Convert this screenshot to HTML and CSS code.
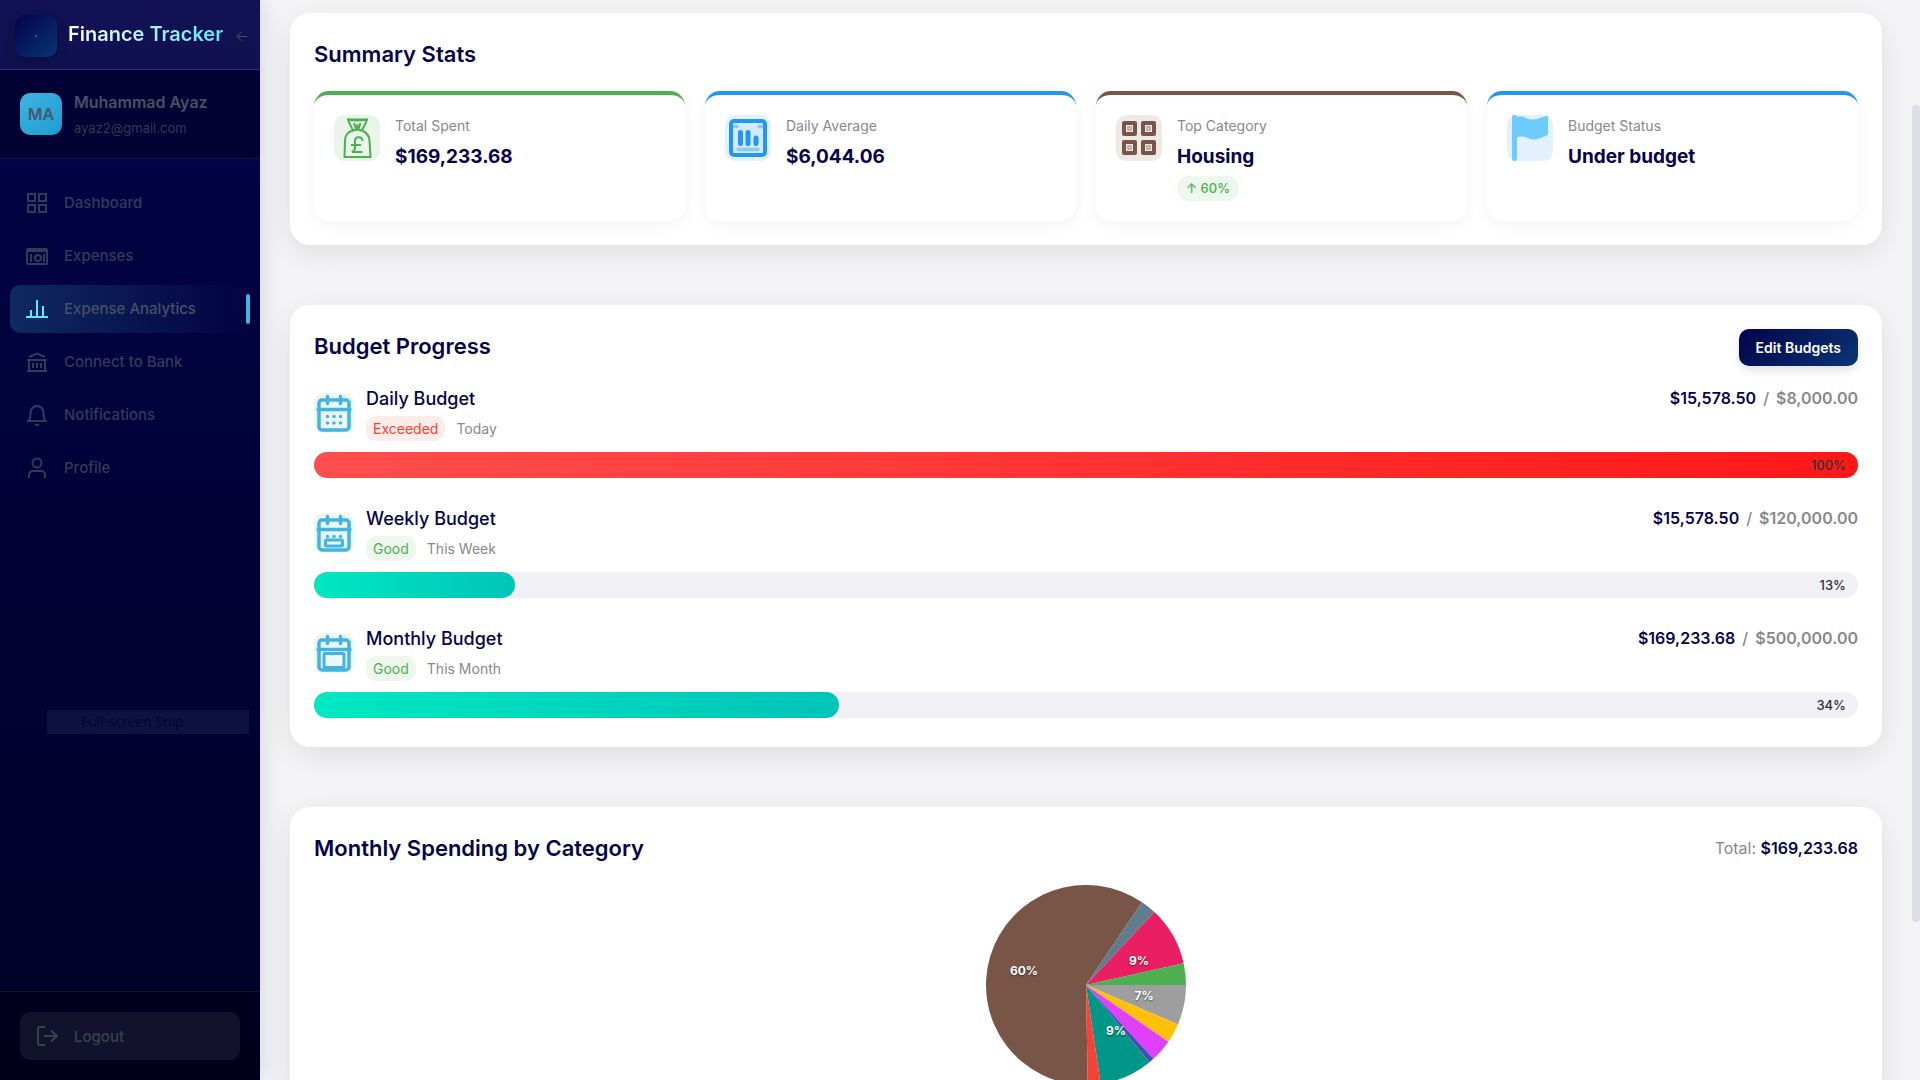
FILE: index.html
```html
<!DOCTYPE html>
<html lang="en">
<head>
<meta charset="utf-8">
<meta name="viewport" content="width=device-width, initial-scale=1">
<title>Finance Tracker – Expense Analytics</title>
<link rel="stylesheet" href="styles.css">
</head>
<body>
<div class="app">
  <aside class="sidebar">
    <div class="brand">
      <div class="brand-logo"><span class="brand-dot"></span></div>
      <span class="brand-name">Finance Tracker</span>
      <button class="collapse" type="button" aria-label="Collapse sidebar">←</button>
    </div>
    <div class="profile">
      <div class="avatar">MA</div>
      <div class="profile-text">
        <span class="profile-name">Muhammad Ayaz</span>
        <span class="profile-mail">ayaz2@gmail.com</span>
      </div>
    </div>
    <nav class="nav">
      <a class="nav-item" href="#">
        <svg class="nav-icon" viewBox="0 0 22 22"><path d="M2 2h7v7H2zM13 2h7v7h-7zM2 13h7v7H2zM13 13h7v7h-7z"/></svg>
        <span>Dashboard</span>
      </a>
      <a class="nav-item" href="#">
        <svg class="nav-icon" viewBox="0 0 22 22"><rect x="1" y="4" width="20" height="15" rx="1"/><path d="M1 6h20M5 9v8M18 9v8"/><circle cx="12" cy="13" r="3"/></svg>
        <span>Expenses</span>
      </a>
      <a class="nav-item active" href="#" aria-current="page">
        <svg class="nav-icon" viewBox="0 0 22 22"><path d="M0 19h22M5 19v-7M11 19V2M17 19V8"/></svg>
        <span>Expense Analytics</span>
      </a>
      <a class="nav-item" href="#">
        <svg class="nav-icon" viewBox="0 0 22 22"><path d="M3 6l8-3.500L19 6M1 9h20M3 9v11M19 9v11M1 20h20M7 12v5M11 12v5M15 12v5"/></svg>
        <span>Connect to Bank</span>
      </a>
      <a class="nav-item" href="#">
        <svg class="nav-icon" viewBox="0 0 22 22"><path d="M1 17h20M3 17c1-2 1.500-4 1.500-8a6.500 7 0 0 1 13 0c0 4 .5 6 1.500 8M9 20q2 2.500 4 0"/></svg>
        <span>Notifications</span>
      </a>
      <a class="nav-item" href="#">
        <svg class="nav-icon" viewBox="0 0 22 22"><circle cx="11" cy="6" r="4.500"/><path d="M3 21v-3a4 4 0 0 1 4-4h8a4 4 0 0 1 4 4v3"/></svg>
        <span>Profile</span>
      </a>
    </nav>
    <div class="sidebar-foot">
      <button class="logout" type="button">
        <svg class="nav-icon" viewBox="0 0 22 22"><path d="M9 2H4a2 2 0 0 0-2 2v14a2 2 0 0 0 2 2h5M8 11h13M15 5.500l6 5.500-6 5.500"/></svg>
        <span>Logout</span>
      </button>
    </div>
    <div class="snip">Full-screen Snip</div>
  </aside>

  <main class="content">
    <section class="panel">
      <h2>Summary Stats</h2>
      <div class="stats">
        <article class="stat stat-green">
          <div class="stat-icon">
            <svg viewBox="0 0 46 46" fill="none" stroke="currentColor" stroke-width="2"><path d="M14 4.500h19c-1 4-4 8-5 11 5 2 7 5 7.500 10L36.500 42h-26l.5-16c0-5 2-9 8-10.500C17.500 12 15 8 14 4.500z"/><path d="M14 4.500q9 2 19 0M18 15.500q5-1.500 10 0M20 8l2 6M26.500 8l-2 6M23.300 9v5"/><path d="M28.500 26c0-5-7.500-5-7.500 0v7c0 2-1 3-3 4h10.500M17 30h10"/></svg>
          </div>
          <div class="stat-text"><span class="stat-label">Total Spent</span><strong class="stat-value">$169,233.68</strong></div>
        </article>
        <article class="stat stat-blue">
          <div class="stat-icon">
            <svg viewBox="0 0 46 46" fill="none" stroke="currentColor" stroke-linecap="round"><rect x="6" y="6" width="34" height="34" rx="3" fill="currentColor" fill-opacity=".08" stroke-width="4"/><path d="M9 11.500h3M34 11.500h3M13 34.500h20" stroke-width="3.500" opacity=".4"/><path d="M15.500 17.500v11M23 17.500v11M31 23v5.500" stroke-width="5"/></svg>
          </div>
          <div class="stat-text"><span class="stat-label">Daily Average</span><strong class="stat-value">$6,044.06</strong></div>
        </article>
        <article class="stat stat-brown">
          <div class="stat-icon">
            <svg viewBox="0 0 46 46" fill="none" stroke="currentColor" stroke-width="4" stroke-linejoin="round"><path d="M8 8h11v11H8zM27 8h11v11H27zM8 27h11v11H8zM27 27h11v11H27z"/><path d="M12 12h3v3h-3zM31 12h3v3h-3zM12 31h3v3h-3zM31 31h3v3h-3z" stroke-width="2" opacity=".4"/></svg>
          </div>
          <div class="stat-text"><span class="stat-label">Top Category</span><strong class="stat-value">Housing</strong><span class="trend">↑ 60%</span></div>
        </article>
        <article class="stat stat-blue">
          <div class="stat-icon">
            <svg viewBox="0 0 46 46" fill="#6cccff"><rect x="5" y="0" width="5" height="46" rx="2"/><path d="M9 2.500c4-2.500 8-.5 11 1 7 3 13-1 19-2.500q2-.5 2 1V19q0 1-1 1.500c-5 1.500-12 6.500-19 2.500-4-2-8-2-12-.5z"/></svg>
          </div>
          <div class="stat-text"><span class="stat-label">Budget Status</span><strong class="stat-value">Under budget</strong></div>
        </article>
      </div>
    </section>

    <section class="panel panel-budget">
      <div class="panel-head">
        <h2>Budget Progress</h2>
        <button class="edit" type="button">Edit Budgets</button>
      </div>
      <div class="budgets">
        <article class="budget">
          <div class="budget-head">
            <svg class="cal" viewBox="0 0 40 40"><rect x="5" y="7" width="30" height="30" rx="3"/><path d="M4 16.500h32M13.500 3.500v7M26.500 3.500v7"/><path class="dots" d="M13.500 23.500h0M20 23.500h0M26.500 23.500h0M13.500 30h0M20 30h0M26.500 30h0"/></svg>
            <div class="budget-text">
              <h3>Daily Budget</h3>
              <div class="budget-meta"><span class="tag tag-bad">Exceeded</span><span>Today</span></div>
            </div>
            <div class="amount"><b>$15,578.50</b><i>/</i><span>$8,000.00</span></div>
          </div>
          <div class="bar"><div class="fill fill-bad" style="width:100%"></div><span class="percent">100%</span></div>
        </article>
        <article class="budget">
          <div class="budget-head">
            <svg class="cal" viewBox="0 0 40 40"><rect x="5" y="7" width="30" height="30" rx="3"/><path d="M4 16.500h32M13.500 3.500v7M26.500 3.500v7"/><path class="dots" d="M13.500 23.500h0M20 23.500h0M26.500 23.500h0"/><rect class="inner" x="11.500" y="27" width="17" height="6" rx="1"/></svg>
            <div class="budget-text">
              <h3>Weekly Budget</h3>
              <div class="budget-meta"><span class="tag tag-good">Good</span><span>This Week</span></div>
            </div>
            <div class="amount"><b>$15,578.50</b><i>/</i><span>$120,000.00</span></div>
          </div>
          <div class="bar"><div class="fill" style="width:13%"></div><span class="percent">13%</span></div>
        </article>
        <article class="budget">
          <div class="budget-head">
            <svg class="cal" viewBox="0 0 40 40"><rect x="5" y="7" width="30" height="30" rx="3"/><path d="M4 16.500h32M13.500 3.500v7M26.500 3.500v7"/><rect class="inner" x="10" y="20.500" width="20" height="14" rx="1"/></svg>
            <div class="budget-text">
              <h3>Monthly Budget</h3>
              <div class="budget-meta"><span class="tag tag-good">Good</span><span>This Month</span></div>
            </div>
            <div class="amount"><b>$169,233.68</b><i>/</i><span>$500,000.00</span></div>
          </div>
          <div class="bar"><div class="fill" style="width:34%"></div><span class="percent">34%</span></div>
        </article>
      </div>
    </section>

    <section class="panel">
      <div class="panel-head panel-head-pie">
        <h2>Monthly Spending by Category</h2>
        <p class="total">Total: <b>$169,233.68</b></p>
      </div>
      <svg class="pie" viewBox="-100 -100 200 200">
        <path fill="#795548" d="M0 0L56.060 -82.810A100 100 0 1 0 1.750 99.980z"/>
        <path fill="#607d8b" d="M0 0L68.450 -72.900A100 100 0 0 0 56.060 -82.810z"/>
        <path fill="#e91e63" d="M0 0L97.630 -21.640A100 100 0 0 0 68.450 -72.900z"/>
        <path fill="#4caf50" d="M0 0L100 0A100 100 0 0 0 97.630 -21.640z"/>
        <path fill="#9e9e9e" d="M0 0L91.910 39.390A100 100 0 0 0 100 0z"/>
        <path fill="#ffc107" d="M0 0L82.410 56.640A100 100 0 0 0 91.910 39.390z"/>
        <path fill="#e040fb" d="M0 0L67.430 73.850A100 100 0 0 0 82.410 56.640z"/>
        <path fill="#3f51b5" d="M0 0L63.470 77.270A100 100 0 0 0 67.430 73.850z"/>
        <path fill="#009688" d="M0 0L14.610 98.930A100 100 0 0 0 63.470 77.270z"/>
        <path fill="#f44336" d="M0 0L1.750 99.980A100 100 0 0 0 14.610 98.930z"/>
        <text x="-62" y="-10">60%</text>
        <text x="53" y="-20">9%</text>
        <text x="58" y="15">7%</text>
        <text x="30" y="50">9%</text>
      </svg>
    </section>
  </main>
  <div class="rail"><div class="thumb"></div></div>
</div>
</body>
</html>
```
FILE: styles.css
```css
* { box-sizing: border-box; }

body {
  margin: 0;
  font-family: Inter, "Open Sans", sans-serif;
  color: #04044a;
  background: #f4f4f7;
}

h2, h3, p { margin: 0; }
button { font: inherit; border: 0; cursor: pointer; }

.app {
  display: flex;
  height: 100vh;
  overflow: hidden;
}

/* Sidebar */
.sidebar {
  position: relative;
  z-index: 1;
  display: flex;
  flex-direction: column;
  flex: 0 0 260px;
  background: linear-gradient(180deg, #03034a, #010126);
  box-shadow: 4px 0 20px rgba(0, 0, 0, .1);
}

.brand {
  display: flex;
  align-items: center;
  height: 70px;
  padding: 0 11px 0 15px;
  background: rgba(255, 255, 255, .06);
  border-bottom: 1px solid rgba(255, 255, 255, .14);
}

.brand-logo {
  display: flex;
  align-items: center;
  justify-content: center;
  width: 42px;
  height: 42px;
  margin: 2px 11px 0 0;
  border-radius: 10px;
  background: linear-gradient(135deg, #03034a, #0a3575);
  box-shadow: 0 4px 10px rgba(0, 0, 0, .25);
}

.brand-dot {
  width: 2px;
  height: 2px;
  background: #3a5585;
}

.brand-name {
  padding-bottom: 2px;
  font-size: 20px;
  font-weight: 600;
  line-height: 28px;
  white-space: nowrap;
  color: transparent;
  background: linear-gradient(90deg, #fff, #5ee7ff);
  background-clip: text;
  -webkit-background-clip: text;
}

.collapse {
  margin-left: auto;
  padding: 2px 0 0;
  font-size: 15px;
  font-weight: 300;
  color: #454a70;
  background: none;
}

.profile {
  display: flex;
  gap: 12px;
  height: 89px;
  padding: 23px 20px 0;
  background: rgba(0, 0, 0, .25);
  border-bottom: 1px solid rgba(255, 255, 255, .08);
}

.avatar {
  width: 42px;
  height: 42px;
  border-radius: 10px;
  font-size: 16px;
  font-weight: 600;
  line-height: 42px;
  text-align: center;
  color: #46586f;
  background: linear-gradient(135deg, #42b4e0, #1a9dd2);
}

.profile-text {
  display: flex;
  flex-direction: column;
  gap: 8px;
}

.profile-name {
  font-size: 16px;
  font-weight: 600;
  line-height: 18px;
  color: #4a4f62;
}

.profile-mail {
  font-size: 13px;
  line-height: 18px;
  color: #343854;
}

.nav {
  display: flex;
  flex: 1;
  flex-direction: column;
  gap: 5px;
  padding: 20px 10px;
}

.nav-item {
  position: relative;
  display: flex;
  align-items: center;
  gap: 16px;
  height: 48px;
  padding: 0 16px;
  border-radius: 10px;
  font-size: 15px;
  font-weight: 500;
  color: #343a57;
  text-decoration: none;
}

.nav-item span { padding-bottom: 2px; }

.nav-icon {
  width: 22px;
  height: 22px;
  fill: none;
  stroke: currentColor;
  stroke-width: 2;
}

.nav-item.active {
  color: #465066;
  background: linear-gradient(90deg, #0f2961, rgba(15, 41, 97, 0));
}

.nav-item.active .nav-icon { color: #5ee7ff; }

.nav-item.active::after {
  content: "";
  position: absolute;
  top: 9px;
  right: 0;
  width: 4px;
  height: 30px;
  border-radius: 2px;
  background: #42b4e0;
}

.sidebar-foot {
  padding: 20px;
  background: rgba(0, 0, 0, .25);
  border-top: 1px solid rgba(255, 255, 255, .08);
}

.logout {
  display: flex;
  align-items: center;
  gap: 16px;
  width: 100%;
  height: 48px;
  padding: 0 16px;
  border-radius: 10px;
  font-size: 15px;
  font-weight: 500;
  color: #39414f;
  background: #12122d;
}

.snip {
  position: absolute;
  top: 710px;
  left: 47px;
  width: 202px;
  height: 24px;
  padding-left: 34px;
  font-family: "Open Sans", sans-serif;
  font-size: 14px;
  line-height: 24px;
  color: #04042e;
  background: #0d1240;
}

/* Content */
.content {
  display: flex;
  flex: 1;
  flex-direction: column;
  gap: 60px;
  min-width: 0;
  padding: 13px 30px 0;
}

.panel {
  flex: none;
  padding: 24px;
  border-radius: 20px;
  background: #fff;
  box-shadow: 0 8px 30px rgba(0, 0, 0, .09);
}

.panel h2 {
  font-size: 22px;
  font-weight: 600;
  line-height: 34px;
}

.panel-head {
  display: flex;
  align-items: flex-start;
  justify-content: space-between;
  height: 37px;
}

.stats {
  display: grid;
  grid-template-columns: repeat(4, 1fr);
  gap: 20px;
  margin-top: 20px;
}

.stat {
  display: flex;
  gap: 15px;
  min-height: 130px;
  padding: 20px;
  border-top: 4px solid;
  border-radius: 15px;
  background: #fff;
  box-shadow: 0 4px 15px rgba(0, 0, 0, .05);
}

.stat-green { color: #4caf50; }
.stat-blue { color: #2196f3; }
.stat-brown { color: #795548; }

.stat-icon {
  width: 46px;
  height: 46px;
  border-radius: 10px;
  background: color-mix(in srgb, currentColor 13%, transparent);
}

.stat-icon svg { display: block; }

.stat-text {
  display: flex;
  flex-direction: column;
  align-items: flex-start;
}

.stat-label {
  font-size: 14px;
  line-height: 22px;
  color: #888;
}

.stat-value {
  margin-top: 5px;
  font-size: 19px;
  font-weight: 700;
  line-height: 30px;
  color: #04044a;
}

.trend {
  margin-top: 4px;
  padding: 0 9px;
  border-radius: 12px;
  font-size: 13px;
  font-weight: 500;
  line-height: 25px;
  color: #4caf50;
  background: #edf7ee;
}

.edit {
  height: 37px;
  padding: 0 17px;
  border-radius: 10px;
  font-size: 14px;
  font-weight: 600;
  color: #fff;
  background: linear-gradient(135deg, #03034a, #0a3575);
  box-shadow: 0 4px 10px rgba(0, 0, 0, .12);
}

.panel-budget { padding-bottom: 29px; }

.budgets {
  display: flex;
  flex-direction: column;
  gap: 28px;
  margin-top: 20px;
}

.budget-head {
  display: flex;
  height: 55px;
}

.cal {
  width: 40px;
  height: 40px;
  margin: 7px 12px 0 0;
  border-radius: 10px;
  background: #ecf7fc;
  fill: none;
  stroke: #42b4e0;
  stroke-width: 3.500px;
  stroke-linecap: round;
}

.cal .inner { stroke-width: 3px; }

.budget-text h3 {
  font-size: 18px;
  font-weight: 500;
  line-height: 26px;
}

.budget-meta {
  display: flex;
  gap: 11px;
  margin-top: 4px;
  font-size: 14px;
  line-height: 25px;
  color: #888;
}

.tag {
  padding: 0 7px;
  border-radius: 10px;
}

.tag-bad { color: #f44336; background: #feecea; }
.tag-good { color: #4caf50; background: #edf7ee; }

.amount {
  display: flex;
  gap: 7px;
  margin-left: auto;
  font-size: 16px;
  font-weight: 600;
  line-height: 24px;
  color: #888;
}

.amount b { color: #04044a; font-weight: 600; }
.amount i { font-style: normal; font-weight: 500; }

.bar {
  position: relative;
  height: 26px;
  margin-top: 11px;
  border-radius: 13px;
  background: #f0f0f5;
}

.fill {
  height: 100%;
  border-radius: 13px;
  background: linear-gradient(90deg, #00e8c1, #00c4b9);
}

.fill-bad { background: linear-gradient(90deg, #ff4e4e, #ff1717); }

.percent {
  position: absolute;
  top: 0;
  right: 12px;
  font-size: 13px;
  font-weight: 500;
  line-height: 26px;
  color: #333;
}

.panel-head-pie {
  align-items: center;
  height: 34px;
}

.total { font-size: 16px; color: #888; }
.total b { font-weight: 600; color: #04044a; }

.pie {
  display: block;
  width: 200px;
  height: 200px;
  margin: 20px auto 0;
}

.pie text {
  font-size: 12px;
  font-weight: 700;
  text-anchor: middle;
  fill: #fff;
  text-shadow: 0 1px 2px rgba(0, 0, 0, .5);
}

/* Scroll rail */
.rail { flex: 0 0 8px; padding-top: 105px; }

.thumb {
  height: 817px;
  border-radius: 4px;
  background: #dddde8;
}
```
